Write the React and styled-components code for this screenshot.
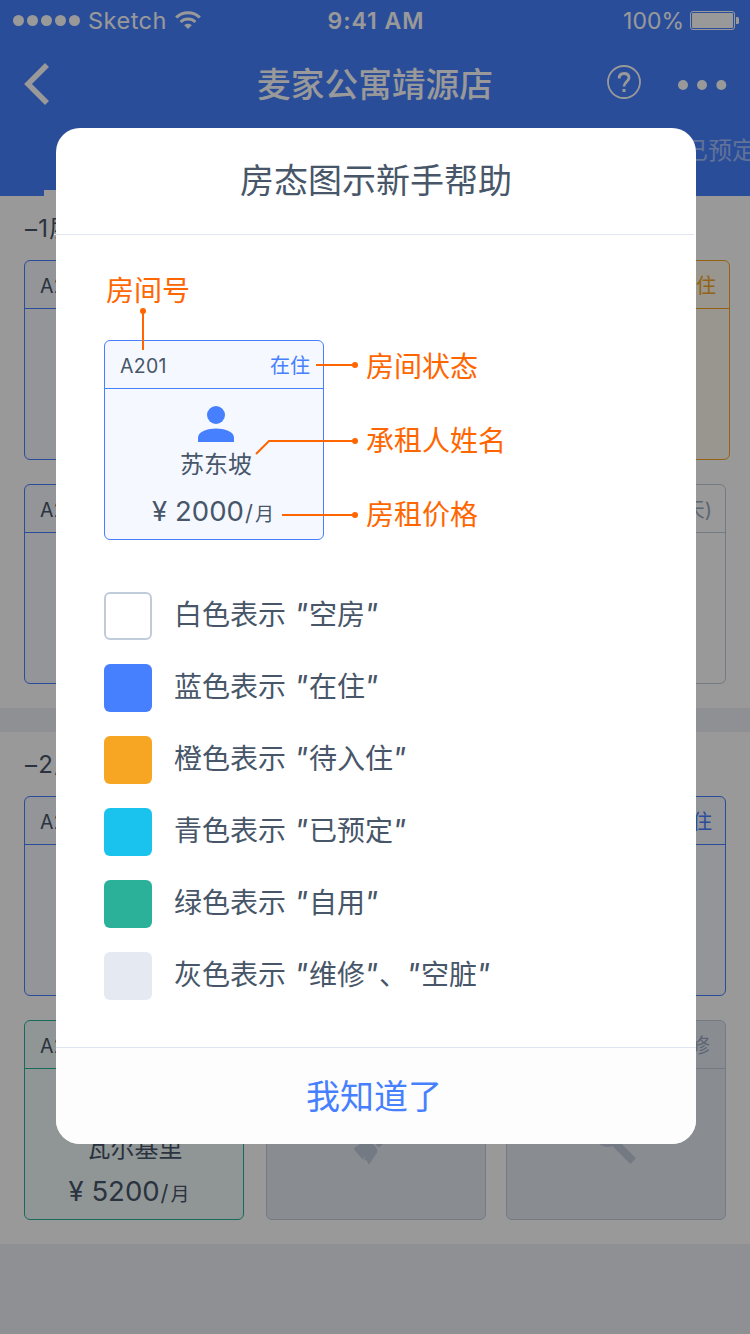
import React from 'react';
import styled, { createGlobalStyle } from 'styled-components';

const Global = createGlobalStyle`
  * { box-sizing: border-box; }
  body {
    margin: 0;
    background: #eef0f6;
    color: #475669;
    font-family: Inter, "Noto Sans CJK SC", sans-serif;
    overflow: hidden;
  }
`;

const Screen = styled.div`
  position: relative;
  width: 750px;
  height: 1334px;
  overflow: hidden;
  background: #eef0f6;
`;

const Header = styled.header`
  height: 196px;
  background: #4680ff;
  color: #fff;
`;

const StatusBar = styled.div`
  display: grid;
  grid-template-columns: 1fr auto 1fr;
  align-items: center;
  height: 40px;
  padding: 1px 11px 0 13px;
`;

const Carrier = styled.div`
  display: flex;
  align-items: center;
  font-size: 23.5px;
  letter-spacing: 0.5px;
`;

const CarrierName = styled.span`
  margin-right: 8px;
`;

const Signal = styled.div`
  display: flex;
  gap: 3px;
  margin-right: 8px;
`;

const SignalDot = styled.i`
  width: 11px;
  height: 11px;
  border-radius: 50%;
  background: #fff;
`;

const Clock = styled.div`
  font-weight: 600;
  font-size: 23px;
  letter-spacing: 1px;
`;

const Power = styled.div`
  display: flex;
  align-items: center;
  justify-content: flex-end;
  gap: 6px;
  font-size: 23px;
`;

const NavBar = styled.div`
  display: grid;
  grid-template-columns: 232px 1fr 232px;
  align-items: center;
  height: 88px;
  padding: 0 23px;
`;

const NavTitle = styled.h1`
  margin: 0;
  padding-top: 2px;
  text-align: center;
  font-size: 33.7px;
  font-weight: 500;
  line-height: 60px;
`;

const NavActions = styled.div`
  display: flex;
  align-items: center;
  justify-content: flex-end;
  gap: 37px;
  & > :first-child { margin-bottom: 4px; }
  & > :last-child { margin-top: 2px; }
`;

const Tabs = styled.div`
  display: flex;
  justify-content: space-between;
  height: 68px;
  padding-left: 44px;
`;

const Tab = styled.div`
  flex: none;
  width: ${(p) => (p.$active ? 48 : 66)}px;
  height: 68px;
  font-size: 24px;
  line-height: 45px;
  white-space: nowrap;
  border-bottom: 6px solid ${(p) => (p.$active ? '#fff' : 'transparent')};
  color: rgba(255, 255, 255, ${(p) => (p.$active ? 1 : 0.5)});
`;

const Floor = styled.section`
  height: 512px;
  padding: 0 20px 0 24px;
  margin-bottom: 24px;
  background: #fff;
`;

const FloorTitle = styled.h2`
  margin: 0;
  height: 64px;
  padding-left: 1px;
  font-size: 24px;
  font-weight: 400;
  line-height: 66px;
  letter-spacing: 1.3px;
`;

const RoomRow = styled.div`
  display: flex;
  gap: 22px;
  margin-bottom: 24px;
`;

const tones = {
  blue: { line: '#4680ff', fill: '#f5f8ff', head: '#4680ff' },
  orange: { line: '#f7a623', fill: '#fefaee', head: '#f7a623' },
  white: { line: '#c0ccda', fill: '#ffffff', head: '#99a9bf' },
  green: { line: '#2bb199', fill: '#f1faf9', head: '#2bb199' },
  gray: { line: '#c0ccda', fill: '#e5e9f2', head: '#99a9bf' },
};

const Card = styled.article`
  flex: none;
  width: ${(p) => p.$width || 220}px;
  height: 200px;
  margin-left: ${(p) => (p.$tight ? -2 : 0)}px;
  border: 1px solid ${(p) => tones[p.$tone].line};
  border-radius: 6px;
  background: ${(p) => tones[p.$tone].fill};
`;

const CardHead = styled.div`
  display: flex;
  justify-content: space-between;
  height: 48px;
  padding: 0 ${(p) => (p.$tone === 'gray' ? 15 : 13)}px 0 15px;
  border-bottom: 1px solid ${(p) => tones[p.$tone].line};
  font-size: 20px;
  line-height: 50px;
`;

const RoomNumber = styled.span`
  font-size: 19.5px;
  letter-spacing: 0.3px;
`;

const RoomState = styled.span`
  margin-left: auto;
  color: ${(p) => tones[p.$tone].head};
`;

const CardBody = styled.div`
  display: flex;
  flex-direction: column;
  align-items: center;
  padding: 17px ${(p) => (p.$low ? 4 : 0)}px 0 ${(p) => (p.$low ? 0 : 4)}px;
`;

const Tenant = styled.div`
  height: 36px;
  margin-top: ${(p) => (p.$low ? 9 : 5)}px;
  margin-bottom: ${(p) => (p.$low ? 2 : 6)}px;
  padding-left: ${(p) => (p.$low ? 5 : 0)}px;
  font-size: 24px;
  line-height: 36px;
`;

const Price = styled.div`
  display: flex;
  align-items: baseline;
  margin-right: 7px;
  font-size: 27.5px;
  line-height: 44px;
`;

const Yen = styled.span`
  width: 24px;
  text-indent: 1px;
`;

const PerMonth = styled.span`
  font-size: 19px;
`;

const Slash = styled.span`
  display: inline-block;
  width: 11px;
  font-size: 22px;
  text-indent: 1px;
`;

const Facility = styled.div`
  display: flex;
  justify-content: center;
  padding-top: 58px;
`;

const Mask = styled.div`
  position: absolute;
  inset: 0;
  padding: 128px 54px 0 56px;
  background: rgba(0, 0, 0, 0.4);
`;

const Dialog = styled.div`
  display: flex;
  flex-direction: column;
  width: 640px;
  height: 1016px;
  border-radius: 24px;
  background: #fff;
`;

const DialogTitle = styled.h2`
  flex: none;
  height: 107px;
  margin: 0 2px 0 -2px;
  border-bottom: 1px solid #e0e6f1;
  padding-left: 4px;
  text-align: center;
  font-size: 34px;
  font-weight: 400;
  line-height: 106px;
`;

const DialogBody = styled.div`
  flex: 1;
  padding: 35px 48px 0;
`;

const Diagram = styled.div`
  position: relative;
  height: 322px;
`;

const Callout = styled.div`
  color: #ff6600;
  font-size: 28px;
  line-height: 74px;
`;

const TopCallout = styled(Callout)`
  height: 40px;
  padding-left: 2px;
  line-height: 43px;
`;

const DiagramRow = styled.div`
  display: flex;
  gap: 42px;
  margin-top: 30px;
`;

const CalloutList = styled.div`
  margin-top: -10px;
`;

const Leaders = styled.svg`
  position: absolute;
  left: 0;
  top: 0;
`;

const Legend = styled.ul`
  display: flex;
  flex-direction: column;
  gap: 24px;
  margin: 0;
  padding: 0;
  list-style: none;
`;

const LegendItem = styled.li`
  display: flex;
  gap: 22px;
  height: 48px;
  font-size: 28px;
  line-height: 46px;
`;

const Swatch = styled.i`
  width: 48px;
  height: 48px;
  border-radius: 6px;
  background: ${(p) => p.$color};
  border: ${(p) => (p.$outlined ? '2px solid #c0ccda' : '0')};
`;

const Quote = styled.span`
  display: inline-block;
  width: 14px;
  margin-left: ${(p) => (p.$gap ? 9 : 0)}px;
  font-size: 30px;
  font-style: italic;
  line-height: 1;
  text-indent: -1px;
`;

const Confirm = styled.button`
  flex: none;
  height: 97px;
  padding: 2px 4px 0 0;
  border: 0;
  border-top: 1px solid #e0e6f1;
  border-radius: 0 0 24px 24px;
  background: #fdfdfd;
  color: #4680ff;
  font-family: inherit;
  font-size: 34px;
  line-height: 94px;
`;

const WifiIcon = () => (
  <svg width="26" height="19" viewBox="0 0 26 19" fill="none" stroke="#fff" strokeWidth="3">
    <path d="M1.2 6.5C7.7.2 18.3.2 24.8 6.5" />
    <path d="M5.6 11C9.6 7.1 16.4 7.1 20.4 11" />
    <path d="M13 18 9.2 14.3C11.3 12.3 14.7 12.3 16.8 14.3Z" fill="#fff" stroke="none" />
  </svg>
);

const BatteryIcon = () => (
  <svg width="49" height="19" viewBox="0 0 49 19">
    <rect x=".5" y=".5" width="44" height="18" rx="2.5" fill="none" stroke="#fff" />
    <rect x="2" y="2" width="41" height="15" rx="1" fill="#fff" />
    <path d="M46 6h1.500q1.500 0 1.500 1.500v4q0 1.500-1.500 1.500H46z" fill="#fff" />
  </svg>
);

const BackIcon = () => (
  <svg width="28" height="44" viewBox="0 0 28 44" fill="none" stroke="#fff" strokeWidth="5.5">
    <path d="M24 3 5 22 24 41" />
  </svg>
);

const HelpIcon = () => (
  <svg width="34" height="34" viewBox="0 0 34 34" fill="none" stroke="#fff">
    <circle cx="17" cy="17" r="16" strokeWidth="1.8" />
    <path d="M12.200 13.500C12.200 10.200 14 8.500 17 8.500S22 10.200 22 12.800C22 16.300 17 16.800 17 21.500" strokeWidth="2.800" />
    <path d="M17 24v3" strokeWidth="3" />
  </svg>
);

const MoreIcon = () => (
  <svg width="49" height="10" viewBox="0 0 49 10" fill="#fff">
    <circle cx="5" cy="5" r="5" />
    <circle cx="24" cy="5" r="5" />
    <circle cx="43.3" cy="5" r="5" />
  </svg>
);

const PersonIcon = ({ color }) => (
  <svg width="36" height="36" viewBox="0 0 36 36" fill={color}>
    <circle cx="18" cy="9" r="9" />
    <path d="M0 36V31.500C0 25.500 10 22.500 18 22.500S36 25.500 36 31.500V36Z" />
  </svg>
);

const BrushIcon = () => (
  <svg width="44" height="38" viewBox="0 0 44 38" fill="#c0ccda">
    <path d="M9 15 .5 20.800Q-.2 22.500 1.200 24L8.700 32.500 11.700 29 10 33.500 12.500 33 14.200 37H15.400L22.500 26.500Q24.500 23.500 22 20.500L14 12Z" />
    <path d="M17 11 38 0 43 5 24.700 20.700Z" />
  </svg>
);

const WrenchIcon = () => (
  <svg width="40" height="40" viewBox="0 0 40 40" fill="#c0ccda">
    <path d="M40 31.300 34.300 37 16.500 19C12 21 7 20 3.500 17-1 12 0 8 2 5L9 12 15 6 8 0C18-2 27 6 23 14.300Z" />
  </svg>
);

function Room({ tone, number, state, tenant, price, icon, width, tight, low }) {
  return (
    <Card $tone={tone} $width={width} $tight={tight}>
      <CardHead $tone={tone}>
        {number && <RoomNumber>{number}</RoomNumber>}
        {state && <RoomState $tone={tone}>{state}</RoomState>}
      </CardHead>
      {tenant && (
        <CardBody $low={low}>
          <PersonIcon color={tones[tone].head} />
          <Tenant $low={low}>{tenant}</Tenant>
          <Price>
            <Yen>¥</Yen>
            {price}
            <PerMonth><Slash>/</Slash>月</PerMonth>
          </Price>
        </CardBody>
      )}
      {icon && <Facility>{icon}</Facility>}
    </Card>
  );
}

const legend = [
  { color: '#ffffff', outlined: true, name: '白色', states: ['空房'] },
  { color: '#4680ff', name: '蓝色', states: ['在住'] },
  { color: '#f7a623', name: '橙色', states: ['待入住'] },
  { color: '#1ac2ee', name: '青色', states: ['已预定'] },
  { color: '#2bb199', name: '绿色', states: ['自用'] },
  { color: '#e5e9f2', name: '灰色', states: ['维修', '空脏'] },
];

export default function App() {
  return (
    <Screen>
      <Global />
      <Header>
        <StatusBar>
          <Carrier>
            <Signal>
              {[0, 1, 2, 3, 4].map((n) => <SignalDot key={n} />)}
            </Signal>
            <CarrierName>Sketch</CarrierName>
            <WifiIcon />
          </Carrier>
          <Clock>9:41 AM</Clock>
          <Power>100%<BatteryIcon /></Power>
        </StatusBar>
        <NavBar>
          <BackIcon />
          <NavTitle>麦家公寓靖源店</NavTitle>
          <NavActions><HelpIcon /><MoreIcon /></NavActions>
        </NavBar>
        <Tabs>
          <Tab $active />
          <Tab>已预定</Tab>
        </Tabs>
      </Header>

      <Floor>
        <FloorTitle>–1层</FloorTitle>
        <RoomRow>
          <Room tone="blue" number="A201" />
          <Room tone="blue" width={222} />
          <Room tone="orange" state="待入住" />
        </RoomRow>
        <RoomRow>
          <Room tone="blue" number="A201" />
          <Room tone="blue" width={218} />
          <Room tone="white" state="空房(3天)" />
        </RoomRow>
      </Floor>
      <Floor>
        <FloorTitle>–2层</FloorTitle>
        <RoomRow>
          <Room tone="blue" number="A201" />
          <Room tone="blue" width={218} />
          <Room tone="blue" state="在住" />
        </RoomRow>
        <RoomRow>
          <Room tone="green" number="A201" tenant="瓦尔基里" price="5200" low />
          <Room tone="gray" icon={<BrushIcon />} />
          <Room tone="gray" state="维修" icon={<WrenchIcon />} tight />
        </RoomRow>
      </Floor>

      <Mask>
        <Dialog>
          <DialogTitle>房态图示新手帮助</DialogTitle>
          <DialogBody>
            <Diagram>
              <TopCallout>房间号</TopCallout>
              <DiagramRow>
                <Room tone="blue" number="A201" state="在住" tenant="苏东坡" price="2000" />
                <CalloutList>
                  <Callout>房间状态</Callout>
                  <Callout>承租人姓名</Callout>
                  <Callout>房租价格</Callout>
                </CalloutList>
              </DiagramRow>
              <Leaders width="260" height="270" fill="none" stroke="#ff6600" strokeWidth="2">
                <path d="M39 41V80M212 95H251M152 184 165 171H251M178 245H251" />
                <g fill="#ff6600" stroke="none">
                  <circle cx="39" cy="41" r="3" />
                  <circle cx="251" cy="95" r="3" />
                  <circle cx="251" cy="171" r="3" />
                  <circle cx="251" cy="245" r="3" />
                </g>
              </Leaders>
            </Diagram>
            <Legend>
              {legend.map((item) => (
                <LegendItem key={item.name}>
                  <Swatch $color={item.color} $outlined={item.outlined} />
                  <span>
                    {item.name}表示
                    {item.states.map((s, i) => (
                      <React.Fragment key={s}>
                        {i > 0 && '、'}
                        <Quote $gap={i === 0}>"</Quote>
                        {s}
                        <Quote>"</Quote>
                      </React.Fragment>
                    ))}
                  </span>
                </LegendItem>
              ))}
            </Legend>
          </DialogBody>
          <Confirm>我知道了</Confirm>
        </Dialog>
      </Mask>
    </Screen>
  );
}
